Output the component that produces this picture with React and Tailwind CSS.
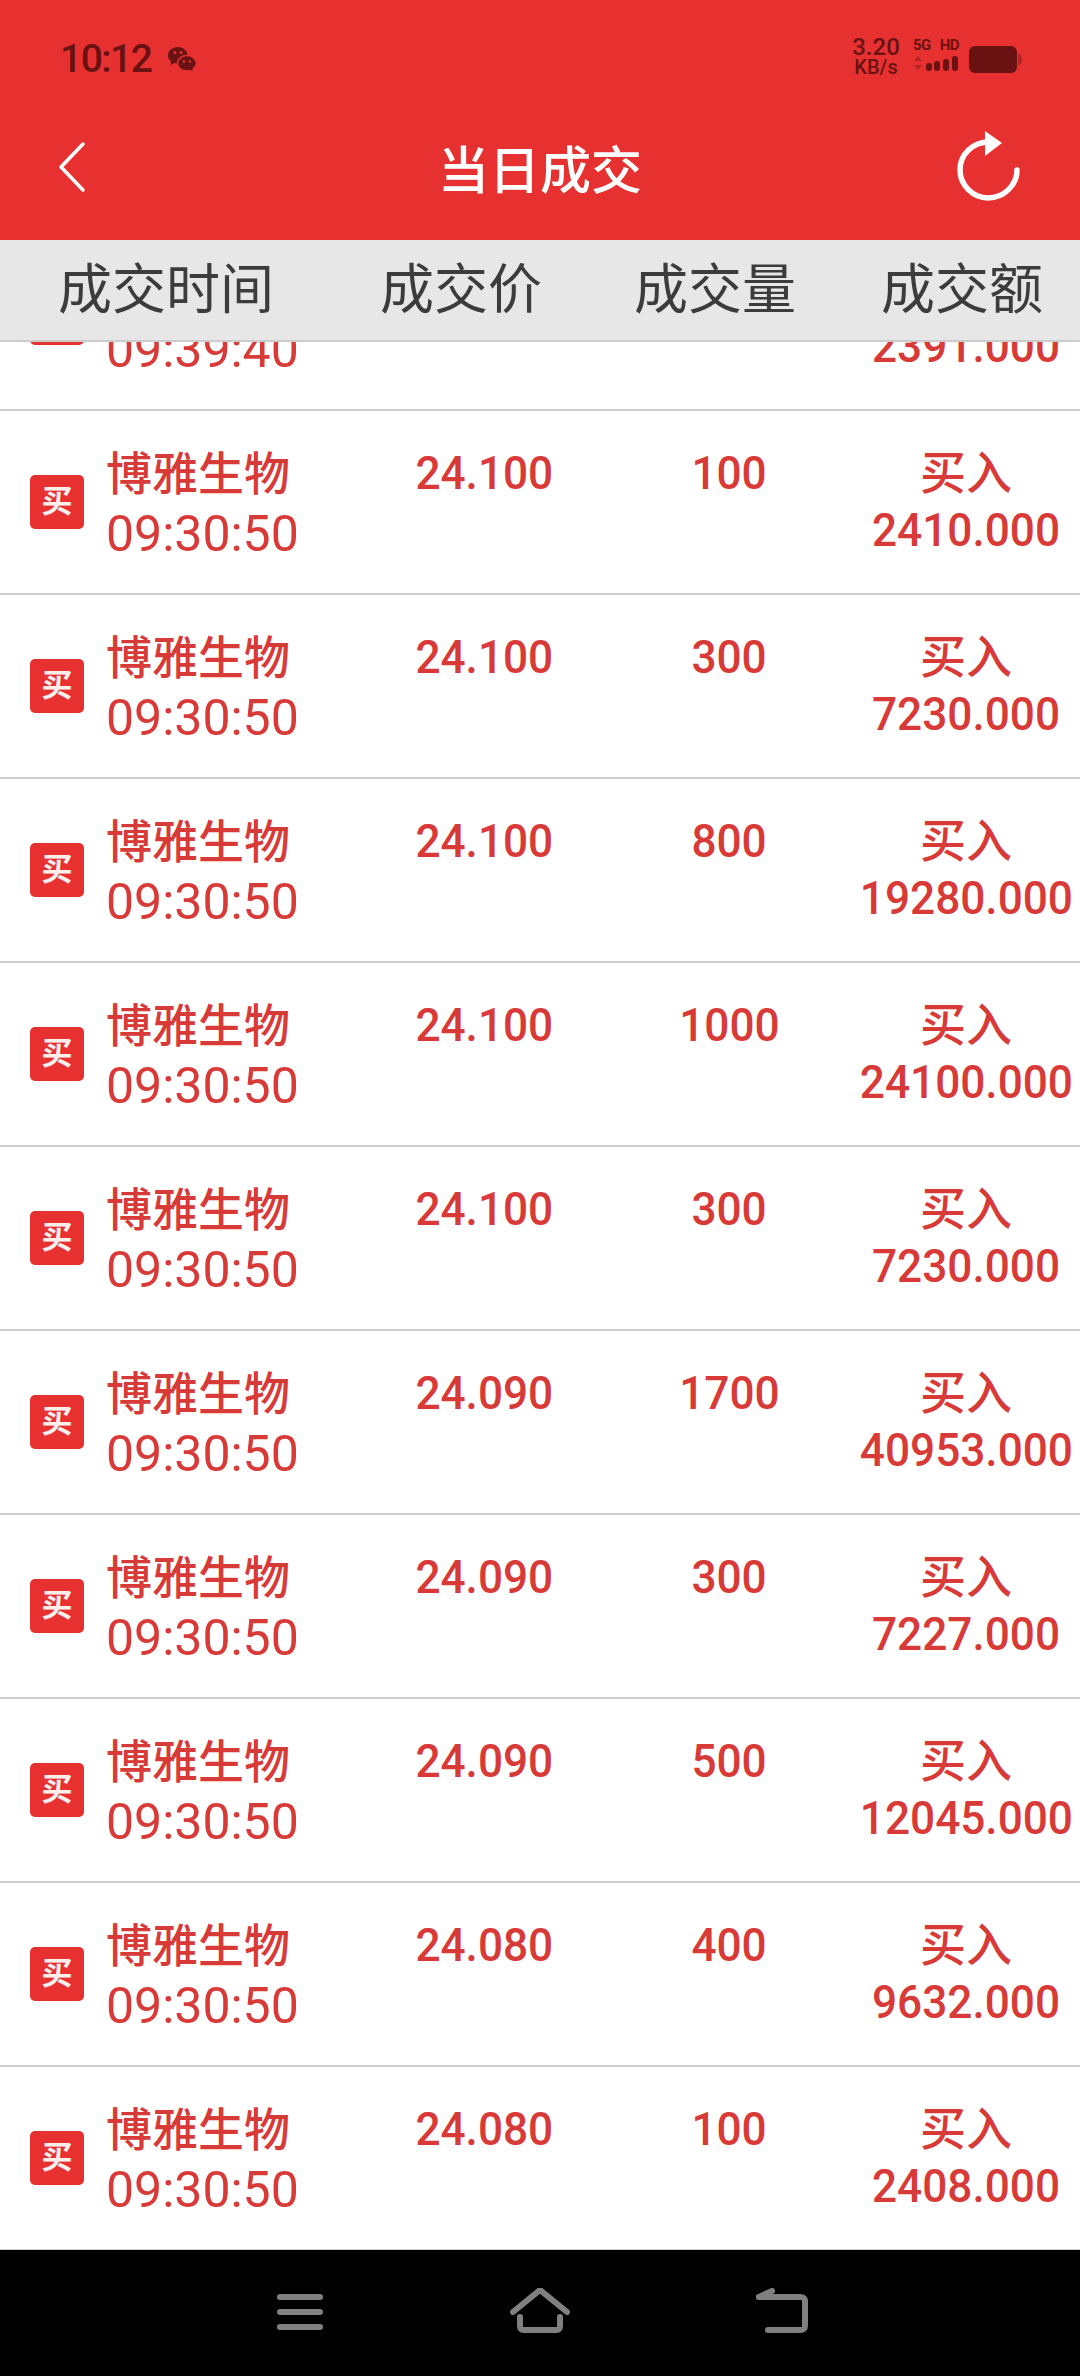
import React from 'react';

const rows = [
  { time: '09:39:40', price: '23.910', volume: '100', amount: '2391.000' },
  { time: '09:30:50', price: '24.100', volume: '100', amount: '2410.000' },
  { time: '09:30:50', price: '24.100', volume: '300', amount: '7230.000' },
  { time: '09:30:50', price: '24.100', volume: '800', amount: '19280.000' },
  { time: '09:30:50', price: '24.100', volume: '1000', amount: '24100.000' },
  { time: '09:30:50', price: '24.100', volume: '300', amount: '7230.000' },
  { time: '09:30:50', price: '24.090', volume: '1700', amount: '40953.000' },
  { time: '09:30:50', price: '24.090', volume: '300', amount: '7227.000' },
  { time: '09:30:50', price: '24.090', volume: '500', amount: '12045.000' },
  { time: '09:30:50', price: '24.080', volume: '400', amount: '9632.000' },
  { time: '09:30:50', price: '24.080', volume: '100', amount: '2408.000' },
];

const fontCjk = "font-['Roboto','Noto_Sans_CJK_SC',sans-serif]";

const StatusBar = () => (
  <div className="flex h-[92px] items-start justify-between pl-[60px] pr-[60px] pt-[36px] text-[#6a1212]">
    <div className="flex items-center">
      <span className="text-[39px] font-medium leading-[46px] tracking-[-1.500px]">10:12</span>
      <svg width="30" height="28" viewBox="0 0 30 28" className="ml-[16px] mt-[2px]">
        <path d="M11 1C5 1 1 5 1 9.500C1 12 2.300 14 4 15.500L3.500 19L7.500 17C8.500 17.300 9.500 17.500 11 17.500C16 17.500 20.500 14 20.500 9.500C20.500 5 16 1 11 1Z" fill="currentColor" />
        <path d="M20 9.500C14.800 9.500 10.500 13 10.500 17.500C10.500 22 14.800 25 20 25C21 25 22 24.800 23 24.500L27 27L26 23C28 21.500 29.500 19.800 29.500 17.500C29.500 13 25.200 9.500 20 9.500Z" fill="currentColor" stroke="#e73131" strokeWidth="1.500" />
        <circle cx="8" cy="6.500" r="1.500" fill="#e73131" />
        <circle cx="14" cy="6.500" r="1.500" fill="#e73131" />
        <circle cx="17" cy="15.500" r="1.300" fill="#e73131" />
        <circle cx="23" cy="15.500" r="1.300" fill="#e73131" />
      </svg>
    </div>
    <div className="flex items-start">
      <div className="flex w-[48px] flex-col items-center font-['Roboto',sans-serif]">
        <span className="text-[24px] font-medium leading-[22px]">3.20</span>
        <span className="text-[20px] font-medium leading-[18px]">KB/s</span>
      </div>
      <div className="ml-[13px] flex w-[46px] flex-col">
        <div className="flex justify-between text-[15px] font-bold leading-[18px] tracking-[-0.500px]">
          <span>5G</span>
          <span>HD</span>
        </div>
        <svg width="46" height="18" viewBox="0 0 46 18" className="mt-[1px]">
          <path d="M5 1L9 6H1ZM1 10H9L5 15Z" fill="#b52424" />
          <rect x="13" y="8" width="6" height="8" rx="3" fill="currentColor" />
          <rect x="21" y="6" width="6" height="10" rx="3" fill="currentColor" />
          <rect x="30" y="4" width="6" height="12" rx="3" fill="currentColor" />
          <rect x="39" y="1" width="6" height="15" rx="3" fill="currentColor" />
        </svg>
      </div>
      <svg width="54" height="28" viewBox="0 0 54 28" className="-mr-[3px] ml-[10px] mt-[10px]">
        <rect x="0" y="0" width="48" height="27" rx="6" fill="currentColor" />
        <path d="M49 8C52 8 53 10 53 13.500C53 17 52 19 49 19Z" fill="#b52424" />
      </svg>
    </div>
  </div>
);

const TitleBar = () => (
  <div className="relative flex h-[148px] items-start justify-center pt-[50px]">
    <svg width="34" height="54" viewBox="0 0 34 54" className="absolute left-[55px] top-[48px]">
      <path d="M28 4L6 27L28 50" fill="none" stroke="white" strokeWidth="3.500" strokeLinecap="round" strokeLinejoin="round" />
    </svg>
    <span className={`${fontCjk} text-[51px] font-medium leading-[60px] text-white`}>当日成交</span>
    <svg width="70" height="76" viewBox="0 0 70 76" className="absolute left-[953px] top-[36px]">
      <path d="M36 14C20 14 7 26 7 42C7 57 20 70 35 70C51 70 64 57 64 42" fill="none" stroke="white" strokeWidth="5.500" strokeLinecap="round" />
      <path d="M32 3L49 15L32 28Z" fill="white" />
    </svg>
  </div>
);

const TableHeader = () => (
  <div className={`${fontCjk} relative z-10 flex h-[102px] border-b-2 border-[#cccccc] bg-[#e7e7e7] pt-[20px] text-center text-[54px] leading-[62px] text-[#3c3c3c]`}>
    <div className="w-[332px]">成交时间</div>
    <div className="w-[258px]">成交价</div>
    <div className="w-[250px]">成交量</div>
    <div className="w-[240px] pl-[4px]">成交额</div>
  </div>
);

const Row = ({ row }) => (
  <div className={`${fontCjk} flex h-[184px] shrink-0 border-b-2 border-[#cfcfcf] text-[#d83a38]`}>
    <div className="flex w-[370px] items-center pl-[30px]">
      <div className="flex h-[54px] w-[54px] items-center justify-center rounded-[5px] bg-[#e73131] text-[31px] font-bold text-[#fdeeee]">买</div>
      <div className="ml-[22px] mt-[3px] flex flex-col">
        <span className="text-[46px] font-medium leading-[60px]">博雅生物</span>
        <span className="text-[50px] font-normal leading-[60px]">{row.time}</span>
      </div>
    </div>
    <div className="w-[228px] pt-[32px] text-center text-[47px] font-medium leading-[60px]">
      <span className="inline-block scale-x-[0.94]">{row.price}</span>
    </div>
    <div className="w-[262px] pt-[32px] text-center text-[47px] font-medium leading-[60px]">
      <span className="inline-block scale-x-[0.94]">{row.volume}</span>
    </div>
    <div className="flex w-[212px] flex-col items-center pt-[32px] font-medium">
      <span className="text-[46px] leading-[60px]">买入</span>
      <span className="-mt-[3px] inline-block scale-x-[0.94] whitespace-nowrap text-[47px] leading-[60px]">{row.amount}</span>
    </div>
  </div>
);

const NavBar = () => (
  <div className="flex h-[126px] shrink-0 items-start bg-black pl-[277px] pt-[38px]">
    <svg width="46" height="44" viewBox="0 0 46 44" className="mt-[6px]">
      <path d="M3 3H43M3 18H43M3 33H43" fill="none" stroke="#808080" strokeWidth="6" strokeLinecap="round" />
    </svg>
    <svg width="60" height="46" viewBox="0 0 60 46" className="ml-[187px]">
      <path d="M3 24L30 2L57 24" fill="none" stroke="#808080" strokeWidth="6" strokeLinecap="round" strokeLinejoin="round" />
      <path d="M10 29V38C10 41 11 42 14 42H46C49 42 50 41 50 38V29" fill="none" stroke="#808080" strokeWidth="6" strokeLinecap="round" />
    </svg>
    <svg width="52" height="46" viewBox="0 0 52 46" className="ml-[186px]">
      <path d="M3 9H44C48 9 49 10 49 14V37C49 41 48 42 44 42H12" fill="none" stroke="#808080" strokeWidth="6" strokeLinecap="round" strokeLinejoin="round" />
      <path d="M3 9L16 3" fill="none" stroke="#808080" strokeWidth="6" strokeLinecap="round" />
    </svg>
  </div>
);

export default function App() {
  return (
    <div className="flex h-[2376px] w-[1080px] flex-col overflow-hidden bg-white">
      <div className="h-[240px] shrink-0 bg-[#e73131] font-['Roboto',sans-serif]">
        <StatusBar />
        <TitleBar />
      </div>
      <TableHeader />
      <div className="min-h-0 flex-1 overflow-hidden">
        <div className="-mt-[115px] flex flex-col">
          {rows.map((row, index) => (
            <Row key={index} row={row} />
          ))}
        </div>
      </div>
      <NavBar />
    </div>
  );
}
